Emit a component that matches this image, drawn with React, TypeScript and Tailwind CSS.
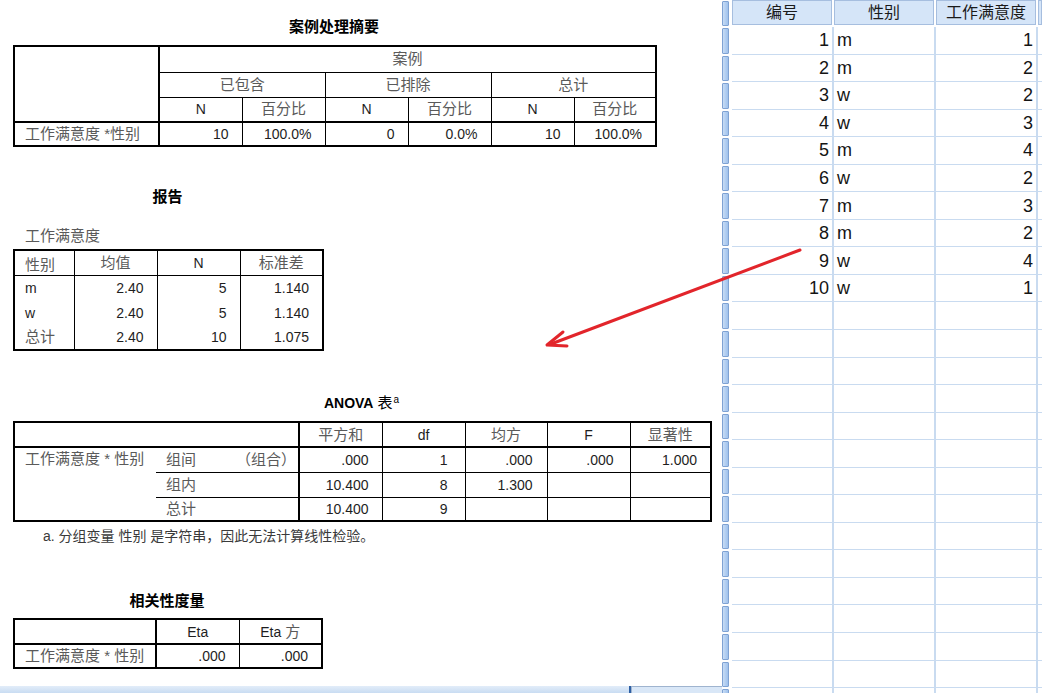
import React from "react";

const RW: Record<number, string> = { 0: "border-r-0", 1: "border-r", 2: "border-r-2" };
const BW: Record<number, string> = { 0: "border-b-0", 1: "border-b", 2: "border-b-2" };

type CellProps = {
  r?: number;
  b?: number;
  align?: "l" | "c" | "r";
  cjk?: boolean;
  rowSpan?: number;
  colSpan?: number;
  valign?: "t" | "m" | "b";
  children?: React.ReactNode;
  extra?: string;
};

function C({ r = 1, b = 1, align = "c", cjk = false, rowSpan, colSpan, valign = "m", children, extra = "" }: CellProps) {
  const al = align === "l" ? "text-left pl-[10px]" : align === "r" ? "text-right pr-[13px]" : "text-center";
  const va = valign === "t" ? "align-top" : valign === "b" ? "align-bottom" : "align-middle";
  const tx = cjk ? "text-[15px] text-[#5a5a5a]" : "text-[14px] text-[#1e1e1e]";
  return (
    <td
      rowSpan={rowSpan}
      colSpan={colSpan}
      className={`p-0 border-black whitespace-nowrap leading-[18px] ${RW[r]} ${BW[b]} ${al} ${va} ${tx} ${extra}`}
    >
      {children}
    </td>
  );
}

function Title({ children }: { children: React.ReactNode }) {
  return <div className="h-[20px] leading-[20px] text-center text-[15px] font-bold text-black">{children}</div>;
}

const gridData: [number, string, number][] = [
  [1, "m", 1],
  [2, "m", 2],
  [3, "w", 2],
  [4, "w", 3],
  [5, "m", 4],
  [6, "w", 2],
  [7, "m", 3],
  [8, "m", 2],
  [9, "w", 4],
  [10, "w", 1],
];

function RowHead({ h }: { h: string }) {
  return (
    <div className={`w-[10px] shrink-0 flex py-[1px] ${h}`}>
      <div className="w-[7px] h-full bg-gradient-to-r from-[#c7dcf5] to-[#9fc1ec] border border-[#7fa2d3] rounded-[1px]" />
    </div>
  );
}

export default function App() {
  const emptyRows = Array.from({ length: 15 });
  return (
    <div className="relative flex w-[1042px] h-[693px] overflow-hidden bg-white font-['Liberation_Sans','Noto_Sans_CJK_SC',sans-serif]">
      {/* Output viewer */}
      <div className="flex flex-col w-[722px] shrink-0">
        <div className="h-[686px] bg-white flex flex-col items-start pl-[13px] pt-[17px]">
          {/* 案例处理摘要 */}
          <div className="flex flex-col w-[642px]">
            <Title>案例处理摘要</Title>
            <table className="mt-[8px] border-collapse table-fixed border-2 border-black w-[642px]">
              <colgroup>
                <col className="w-[145px]" />
                <col className="w-[83px]" />
                <col className="w-[83px]" />
                <col className="w-[83px]" />
                <col className="w-[83px]" />
                <col className="w-[83px]" />
                <col className="w-[82px]" />
              </colgroup>
              <tbody>
                <tr className="h-[26px]">
                  <C rowSpan={3} r={2} b={2} />
                  <C colSpan={6} cjk>案例</C>
                </tr>
                <tr className="h-[25px]">
                  <C colSpan={2} cjk>已包含</C>
                  <C colSpan={2} cjk>已排除</C>
                  <C colSpan={2} cjk>总计</C>
                </tr>
                <tr className="h-[25px]">
                  <C b={2}>N</C>
                  <C b={2} cjk>百分比</C>
                  <C b={2}>N</C>
                  <C b={2} cjk>百分比</C>
                  <C b={2}>N</C>
                  <C b={2} cjk>百分比</C>
                </tr>
                <tr className="h-[24px]">
                  <C align="l" r={2} cjk>工作满意度 *性别</C>
                  <C align="r">10</C>
                  <C align="r">100.0%</C>
                  <C align="r">0</C>
                  <C align="r">0.0%</C>
                  <C align="r">10</C>
                  <C align="r">100.0%</C>
                </tr>
              </tbody>
            </table>
          </div>

          {/* 报告 */}
          <div className="flex flex-col w-[309px] mt-[40px]">
            <Title>报告</Title>
            <div className="mt-[20px] h-[18px] leading-[18px] pl-[12px] text-[15px] text-[#5a5a5a]">工作满意度</div>
            <table className="mt-[4px] border-collapse table-fixed border-2 border-black w-[309px]">
              <colgroup>
                <col className="w-[60px]" />
                <col className="w-[83px]" />
                <col className="w-[83px]" />
                <col className="w-[83px]" />
              </colgroup>
              <tbody>
                <tr className="h-[25px]">
                  <C align="l" cjk valign="b" extra="pb-[1px]">性别</C>
                  <C cjk>均值</C>
                  <C>N</C>
                  <C cjk>标准差</C>
                </tr>
                <tr className="h-[25px]">
                  <C align="l" b={0}>m</C>
                  <C align="r" b={0}>2.40</C>
                  <C align="r" b={0}>5</C>
                  <C align="r" b={0}>1.140</C>
                </tr>
                <tr className="h-[25px]">
                  <C align="l" b={0}>w</C>
                  <C align="r" b={0}>2.40</C>
                  <C align="r" b={0}>5</C>
                  <C align="r" b={0}>1.140</C>
                </tr>
                <tr className="h-[25px]">
                  <C align="l" b={0} cjk>总计</C>
                  <C align="r" b={0}>2.40</C>
                  <C align="r" b={0}>10</C>
                  <C align="r" b={0}>1.075</C>
                </tr>
              </tbody>
            </table>
          </div>

          {/* ANOVA */}
          <div className="flex flex-col w-[697px] mt-[42px]">
            <div className="h-[20px] leading-[20px] text-center text-black">
              <span className="text-[14px] font-bold">ANOVA</span>
              <span className="text-[15px] ml-[4px]">表</span>
              <sup className="text-[10px] ml-[1px]">a</sup>
            </div>
            <table className="mt-[8px] border-collapse table-fixed border-2 border-black w-[697px]">
              <colgroup>
                <col className="w-[142px]" />
                <col className="w-[70px]" />
                <col className="w-[73px]" />
                <col className="w-[83px]" />
                <col className="w-[83px]" />
                <col className="w-[82px]" />
                <col className="w-[83px]" />
                <col className="w-[81px]" />
              </colgroup>
              <tbody>
                <tr className="h-[25px]">
                  <C colSpan={3} r={2} b={2} />
                  <C b={2} cjk>平方和</C>
                  <C b={2}>df</C>
                  <C b={2} cjk>均方</C>
                  <C b={2}>F</C>
                  <C b={2} cjk>显著性</C>
                </tr>
                <tr className="h-[25px]">
                  <C rowSpan={3} r={0} align="l" valign="t" cjk extra="pt-[2px]">工作满意度 * 性别</C>
                  <C r={0} align="l" cjk>组间</C>
                  <C r={2} align="l" cjk extra="pl-[2px]">（组合）</C>
                  <C align="r">.000</C>
                  <C align="r" extra="!pr-[17px]">1</C>
                  <C align="r" extra="!pr-[14px]">.000</C>
                  <C align="r" extra="!pr-[16px]">.000</C>
                  <C align="r">1.000</C>
                </tr>
                <tr className="h-[25px]">
                  <C colSpan={2} r={2} align="l" cjk>组内</C>
                  <C align="r">10.400</C>
                  <C align="r" extra="!pr-[17px]">8</C>
                  <C align="r" extra="!pr-[14px]">1.300</C>
                  <C />
                  <C />
                </tr>
                <tr className="h-[24px]">
                  <C colSpan={2} r={2} align="l" cjk>总计</C>
                  <C align="r">10.400</C>
                  <C align="r" extra="!pr-[17px]">9</C>
                  <C />
                  <C />
                  <C />
                </tr>
              </tbody>
            </table>
            <div className="mt-[5px] h-[18px] leading-[18px] pl-[30px] text-[14px] text-[#3a3a3a]">
              a. 分组变量 性别 是字符串，因此无法计算线性检验。
            </div>
          </div>

          {/* 相关性度量 */}
          <div className="flex flex-col w-[308px] mt-[46px]">
            <Title>相关性度量</Title>
            <table className="mt-[7px] border-collapse table-fixed border-2 border-black w-[308px]">
              <colgroup>
                <col className="w-[142px]" />
                <col className="w-[83px]" />
                <col className="w-[83px]" />
              </colgroup>
              <tbody>
                <tr className="h-[25px]">
                  <C r={2} b={2} />
                  <C b={2}>Eta</C>
                  <C b={2}>
                    Eta <span className="text-[15px] text-[#5a5a5a]">方</span>
                  </C>
                </tr>
                <tr className="h-[24px]">
                  <C r={2} align="l" cjk>工作满意度 * 性别</C>
                  <C align="r">.000</C>
                  <C align="r">.000</C>
                </tr>
              </tbody>
            </table>
          </div>
        </div>
        {/* bottom status strip */}
        <div className="h-[7px] flex">
          <div className="w-[629px] bg-gradient-to-b from-[#e2edf9] to-[#c9dcf2]" />
          <div className="w-[2px] bg-[#2e5fa3]" />
          <div className="flex-1 bg-[#d9e7f7] border-t border-l border-[#9fb4cf]" />
        </div>
      </div>

      {/* Data editor grid */}
      <div className="flex flex-col flex-1 text-[#141414]">
        {/* header */}
        <div className="flex h-[27px] shrink-0">
          <RowHead h="h-[27px]" />
          {["编号", "性别", "工作满意度"].map((t) => (
            <div key={t} className="w-[102px] shrink-0 pr-[2px] pb-[2px]">
              <div className="h-full bg-[#d5e5f8] border border-[#a6bedf] flex items-center justify-center text-[16px] leading-none text-[#1a1a1a]">
                {t}
              </div>
            </div>
          ))}
          <div className="flex-1 pb-[2px]">
            <div className="h-full bg-[#d5e5f8] border border-[#a6bedf]" />
          </div>
        </div>
        {gridData.map(([id, g, s]) => (
          <div key={id} className="flex h-[27.56px] shrink-0">
            <RowHead h="h-[27.56px]" />
            <div className="w-[102px] shrink-0 border-r-2 border-b border-[#c9dbf0] flex items-center justify-end pr-[3px] text-[18px] leading-none">
              {id}
            </div>
            <div className="w-[102px] shrink-0 border-r-2 border-b border-[#c9dbf0] flex items-center pl-[3px] text-[18px] leading-none">
              {g}
            </div>
            <div className="w-[102px] shrink-0 border-r-2 border-b border-[#c9dbf0] flex items-center justify-end pr-[3px] text-[18px] leading-none">
              {s}
            </div>
            <div className="flex-1 border-b border-[#c9dbf0]" />
          </div>
        ))}
        {emptyRows.map((_, i) => (
          <div key={i} className="flex h-[27.56px] shrink-0">
            <RowHead h="h-[27.56px]" />
            <div className="w-[102px] shrink-0 border-r-2 border-b border-[#c9dbf0]" />
            <div className="w-[102px] shrink-0 border-r-2 border-b border-[#c9dbf0]" />
            <div className="w-[102px] shrink-0 border-r-2 border-b border-[#c9dbf0]" />
            <div className="flex-1 border-b border-[#c9dbf0]" />
          </div>
        ))}
      </div>

      {/* red annotation arrow */}
      <svg className="absolute left-0 top-0 pointer-events-none" width="1042" height="693" viewBox="0 0 1042 693">
        <line x1="800" y1="250" x2="551" y2="344" stroke="#e2252b" strokeWidth="3" strokeLinecap="round" />
        <polyline
          points="563,332 547,345 567,346"
          fill="none"
          stroke="#e2252b"
          strokeWidth="3"
          strokeLinecap="round"
          strokeLinejoin="round"
        />
      </svg>
    </div>
  );
}
